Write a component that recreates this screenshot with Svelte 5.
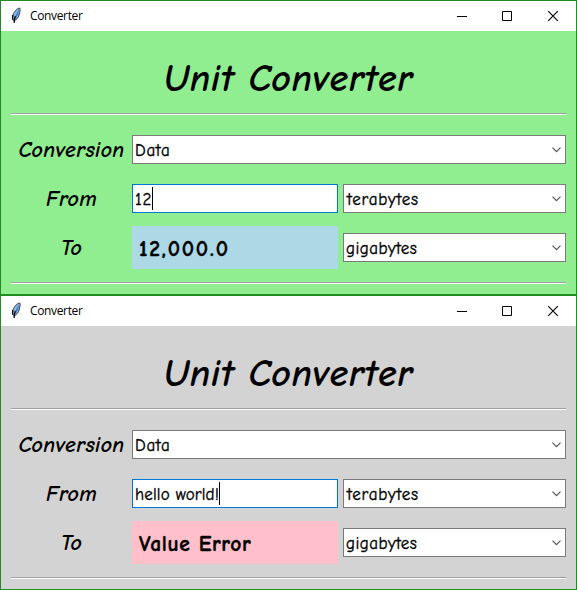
<script>
  const panels = [
    { tone: 'ok', from: '12', result: '12,000.0' },
    { tone: 'error', from: 'hello world!', result: 'Value Error' }
  ];
</script>

{#snippet chevron()}
  <svg class="chevron" width="9" height="6" viewBox="0 0 9 6"><path d="M.5 .7 4.5 4.7 8.5 .7" /></svg>
{/snippet}

<main>
  {#each panels as panel}
    <section class="window {panel.tone}">
      <header>
        <svg class="feather" width="10" height="17" viewBox="0 0 10 17">
          <path class="vane" d="M8.8 1C6 1.3 3.2 4.5 2 8c-.7 2-.6 3.7.1 5l.8.7c2.7-.4 4.8-3.5 5.5-6.8C8.9 4.7 9.4 2.3 8.8 1Z" />
          <path class="shade" d="M8.2 2.2C5.8 5 4.3 8.5 3.5 12.3 5.9 11 7.2 7.5 8.2 2.2Z" />
          <path class="quill" d="M4.2 9C3.6 11 3.3 13 3.1 16M1.6 8v4.5" />
        </svg>
        <span class="caption">Converter</span>
        <svg class="controls" width="102" height="12" viewBox="0 0 102 12">
          <path d="M0 6.5h10M45.5 1.5h9v9h-9Z" />
          <path class="close" d="m91.2 1.2 9.6 9.6m0-9.6-9.6 9.6" />
        </svg>
      </header>
      <div class="content">
        <h1>Unit Converter</h1>
        <div class="rule"></div>
        <div class="form">
          <div class="label">Conversion</div>
          <div class="field wide"><span class="data">Data</span>{@render chevron()}</div>
          <div class="label">From</div>
          <div class="field entry"><span class="typed">{panel.from}</span><i class="caret"></i></div>
          <div class="field"><span class="tera">terabytes</span>{@render chevron()}</div>
          <div class="label">To</div>
          <div class="result">{panel.result}</div>
          <div class="field"><span class="giga">gigabytes</span>{@render chevron()}</div>
        </div>
        <div class="rule"></div>
      </div>
    </section>
  {/each}
</main>

<style>
  :global(body) { margin: 0; }
  main { width: 577px; height: 590px; overflow: hidden; color: #000; font-family: "Comic Sans MS", "Comic Neue", Lato, sans-serif; }
  .window { box-sizing: border-box; height: 295px; border: 1px solid #228b22; }
  .ok { --surface: #90ee90; --answer: #add8e6; --answer-spacing: 1.8px; --typed-spacing: 0.7px; }
  .error { --surface: #d3d3d3; --answer: #ffc0cb; --answer-spacing: 0.6px; --typed-spacing: 0.15px; }
  header { display: flex; align-items: center; height: 30px; padding: 0 17px 0 10px; background: #fff; }
  .feather { flex: none; margin-top: -2px; }
  .vane { fill: #8fb8e4; stroke: #2f3b47; stroke-width: 1; }
  .shade { fill: #3f7cc0; }
  .quill { fill: none; stroke: #05080c; stroke-width: 1.3; }
  .caption { margin-left: 9px; font: 12px/16px "Segoe UI", "Open Sans", sans-serif; letter-spacing: -0.35px; }
  .controls { margin-left: auto; margin-top: -1px; fill: none; stroke: #000; stroke-width: 1; }
  .close { stroke-width: 1.1; }
  .content { box-sizing: border-box; height: 263px; padding: 0 10px; background: var(--surface); }
  h1 { height: 82px; margin: 0; font: italic 700 38px/96px "Comic Sans MS", "Comic Neue", Lato, sans-serif; text-align: center; white-space: nowrap; letter-spacing: 0.6px; }
  .rule { position: relative; height: 1px; background: #a0a0a0; border-bottom: 1px solid #fff; }
  .form { display: grid; grid-template-columns: 121px 206px 5px 223px; grid-template-rows: repeat(3, 49px); padding: 10px 0; align-items: center; }
  .label { grid-column: 1; padding-top: 1px; text-align: center; white-space: nowrap; font-style: italic; font-weight: 700; font-size: 22px; line-height: 30px; letter-spacing: 0.3px; }
  .field { grid-column: 4; box-sizing: border-box; display: flex; align-items: center; height: 29px; padding: 0 4px 0 2px; background: #fff; border: 1px solid #7a7a7a; font-size: 17px; line-height: 27px; white-space: nowrap; -webkit-text-stroke: 0.35px #000; }
  .field span { position: relative; top: 1px; }
  .data { letter-spacing: 0.7px; }
  .tera { margin-left: 1px; letter-spacing: 0.8px; }
  .giga { letter-spacing: 0.45px; }
  .typed { letter-spacing: var(--typed-spacing); }
  .wide { grid-column: 2 / 5; }
  .entry { grid-column: 2; border-color: #0078d7; }
  .caret { width: 1px; height: 23px; background: #000; }
  .chevron { margin-left: auto; fill: none; stroke: #555; stroke-width: 1.2; }
  .result { grid-column: 2; height: 43px; padding-left: 7px; box-sizing: border-box; background: var(--answer); font-size: 21.5px; font-weight: 700; line-height: 47px; letter-spacing: var(--answer-spacing); white-space: nowrap; -webkit-text-stroke: 0.4px #000; }
</style>
